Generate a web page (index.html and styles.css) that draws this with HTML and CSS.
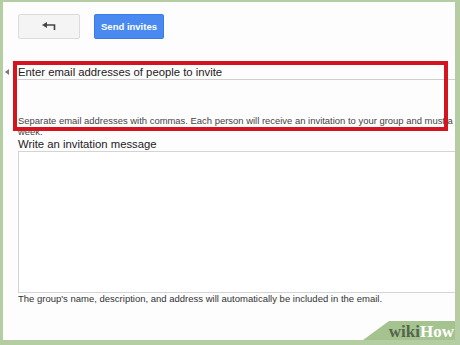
FILE: index.html
```html
<!DOCTYPE html>
<html>
<head>
<title>Invite members</title>
<link rel="stylesheet" href="styles.css">
<meta charset="utf-8">
</head>
<body>
<div class="frame">

<div class="toolbar">
<div class="btn back">
<svg width="14" height="9" viewBox="0 0 14 9">
<polygon points="0,3 5,0 5,6" fill="#444"/>
<path d="M4 3 H12.5 V8" fill="none" stroke="#444" stroke-width="1.6"/>
</svg>
</div>
<div class="btn send">Send invites</div>
</div>

<div class="form">

<div class="field-head">
<span class="caret"></span>
<span class="label">Enter email addresses of people to invite</span>
</div>
<div class="emails"></div>
<p class="help">Separate email addresses with commas. Each person will receive an invitation to your group and must a<br>week.</p>

<div class="label">Write an invitation message</div>
<div class="message"></div>
<p class="note">The group's name, description, and address will automatically be included in the email.</p>

</div>

<!--highlight drawn over the email field-->
<div class="highlight"></div>

<div class="badge"><span class="wiki">wiki</span><span class="how">How</span></div>

</div>
</body>
</html>
```

FILE: styles.css
```css
*
{
padding:0;
margin:0;
box-sizing:border-box;
}

body
{
margin:0;
font-family:"Liberation Sans", Arial, sans-serif;
color:#222;
}

.frame
{
position:relative;
width:460px;
height:345px;
overflow:hidden;
background-color:#fdfdfd;
border-style:solid;
border-color:#b4cda2;
border-width:2px 5px 5px 3px;
}

.toolbar
{
display:flex;
gap:14px;
padding:12px 0px 0px 15px;
}

.btn
{
display:flex;
justify-content:center;
align-items:center;
height:25px;
border-radius:2px;
}

.back
{
width:62px;
background-color:#f4f4f4;
border:1px solid #dcdcdc;
}

.send
{
width:70px;
background-color:#4a8af0;
border:1px solid #3b7be6;
color:#fff;
font-weight:bold;
font-size:9.5px;
}

.form
{
padding:26px 0px 0px 15px;
}

.field-head
{
display:flex;
align-items:center;
margin-left:-13px;
}

.caret
{
width:0;
height:0;
margin-right:9px;
border-top:3px solid transparent;
border-bottom:3px solid transparent;
border-right:4px solid #777;
}

.label
{
font-size:11.3px;
line-height:14px;
color:#222;
}

.emails
{
height:36px;
border-top:1px solid #cfcfcf;
}

.help
{
font-size:9.45px;
line-height:11px;
color:#444;
white-space:nowrap;
}

.message
{
height:142px;
border:1px solid #d4d4d4;
border-right:none;
background-color:#fff;
}

.note
{
font-size:9.5px;
line-height:12px;
color:#333;
}

.highlight
{
position:absolute;
left:10px;
top:59px;
width:435px;
height:70px;
border:4px solid #d4151f;
}

.badge
{
position:absolute;
right:0px;
bottom:0px;
width:92px;
height:19px;
padding-right:1px;
background-color:#a4c38e;
clip-path:polygon(26px 0, 100% 0, 100% 100%, 0 100%);
text-align:right;
font-family:"Liberation Serif", serif;
font-weight:bold;
font-size:17px;
line-height:21px;
}

.wiki
{
color:#56634d;
}

.how
{
color:#fff;
}
```
